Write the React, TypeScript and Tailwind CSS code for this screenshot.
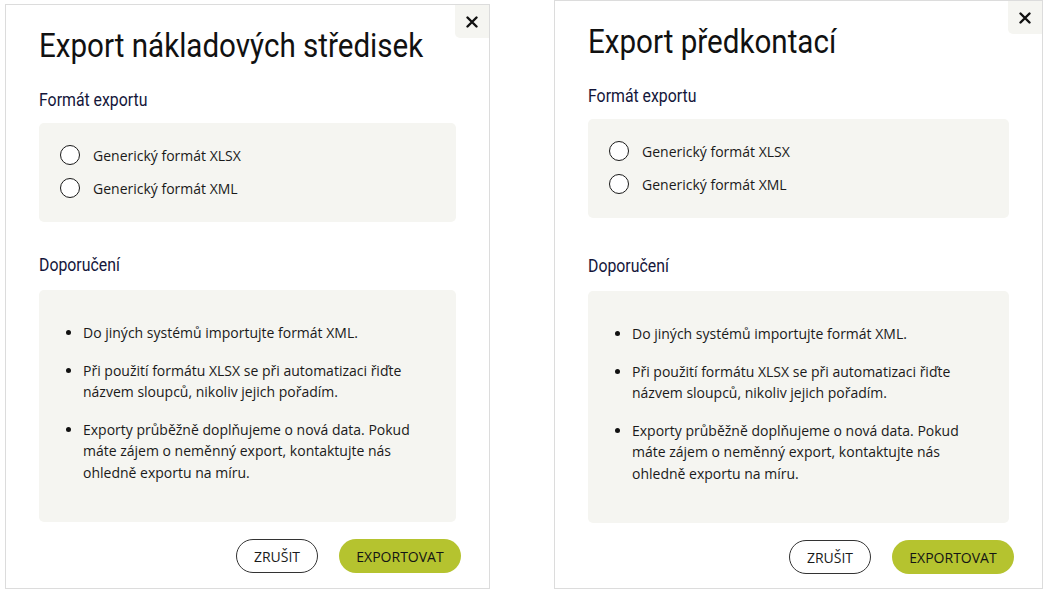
import React from "react";

const titleFont = {
  fontFamily: '"Roboto", "Noto Sans", sans-serif',
};

const tips = [
  "Do jiných systémů importujte formát XML.",
  "Při použití formátu XLSX se při automatizaci řiďte názvem sloupců, nikoliv jejich pořadím.",
  "Exporty průběžně doplňujeme o nová data. Pokud máte zájem o neměnný export, kontaktujte nás ohledně exportu na míru.",
];

function CloseButton() {
  return (
    <button className="absolute top-0 right-0 flex h-[33px] w-[34px] items-center justify-center rounded-bl-[5px] bg-[#f5f5f1]">
      <svg width="12" height="12" viewBox="0 0 12 12">
        <path d="M1.5 1.5 L10.5 10.5 M10.5 1.5 L1.5 10.5" stroke="#111" strokeWidth="2.4" strokeLinecap="round" />
      </svg>
    </button>
  );
}

function Radio({ label }: { label: string }) {
  return (
    <label className="flex h-[22px] items-center gap-[13px]">
      <span className="-ml-[2px] h-[20px] w-[20px] rounded-full border-[1.5px] border-[#1a1a1a] bg-white" />
      <span className="text-[14px] text-[#1a1a1a]">{label}</span>
    </label>
  );
}

function ExportDialog({
  title,
  outer,
  dopGap,
}: {
  title: string;
  outer: string;
  dopGap: string;
}) {
  return (
    <div className={"relative flex shrink-0 flex-col border border-[#dcdcdc] bg-white px-[33px] " + outer}>
      <CloseButton />
      <h2
        className="mt-[20px] origin-left scale-x-[0.87] whitespace-nowrap text-[34px] leading-[40px] text-[#111]"
        style={titleFont}
      >
        {title}
      </h2>
      <h3
        className="mt-[23px] origin-left scale-x-[0.88] whitespace-nowrap text-[18px] leading-[24px] text-[#14163a]"
        style={titleFont}
      >
        Formát exportu
      </h3>
      <div className="mt-[11px] flex flex-col gap-[11px] rounded-[5px] bg-[#f5f5f1] pt-[21px] pb-[23px] pl-[23px]">
        <Radio label="Generický formát XLSX" />
        <Radio label="Generický formát XML" />
      </div>
      <h3
        className={"origin-left scale-x-[0.88] whitespace-nowrap text-[18px] leading-[24px] text-[#14163a] " + dopGap}
        style={titleFont}
      >
        Doporučení
      </h3>
      <div className="mt-[13px] h-[232px] rounded-[5px] bg-[#f5f5f1] pt-[32px] pr-[24px] pl-[44px]">
        <ul className="flex list-disc flex-col gap-[16px] text-[14px] leading-[21.5px] text-[#1a1a1a] marker:text-[#111]">
          {tips.map((t) => (
            <li key={t}>{t}</li>
          ))}
        </ul>
      </div>
      <div className="mt-[17px] -mr-[5px] flex justify-end gap-[21px]">
        <button className="h-[34px] w-[82px] rounded-full border border-[#333] bg-white text-[14px] font-medium text-[#1a1a1a]">
          ZRUŠIT
        </button>
        <button className="h-[34px] w-[122px] rounded-full bg-[#b5c32f] text-[14px] font-medium text-[#141414]">
          EXPORTOVAT
        </button>
      </div>
    </div>
  );
}

export default function App() {
  return (
    <div
      className="flex h-[593px] w-[1046px] items-start bg-white"
      style={{ fontFamily: '"Open Sans", "Noto Sans", sans-serif' }}
    >
      <ExportDialog title="Export nákladových středisek" outer="ml-[5px] mt-[4px] h-[585px] w-[485px]" dopGap="mt-[31px]" />
      <ExportDialog title="Export předkontací" outer="ml-[64px] mt-0 h-[589px] w-[489px]" dopGap="mt-[36px]" />
    </div>
  );
}
